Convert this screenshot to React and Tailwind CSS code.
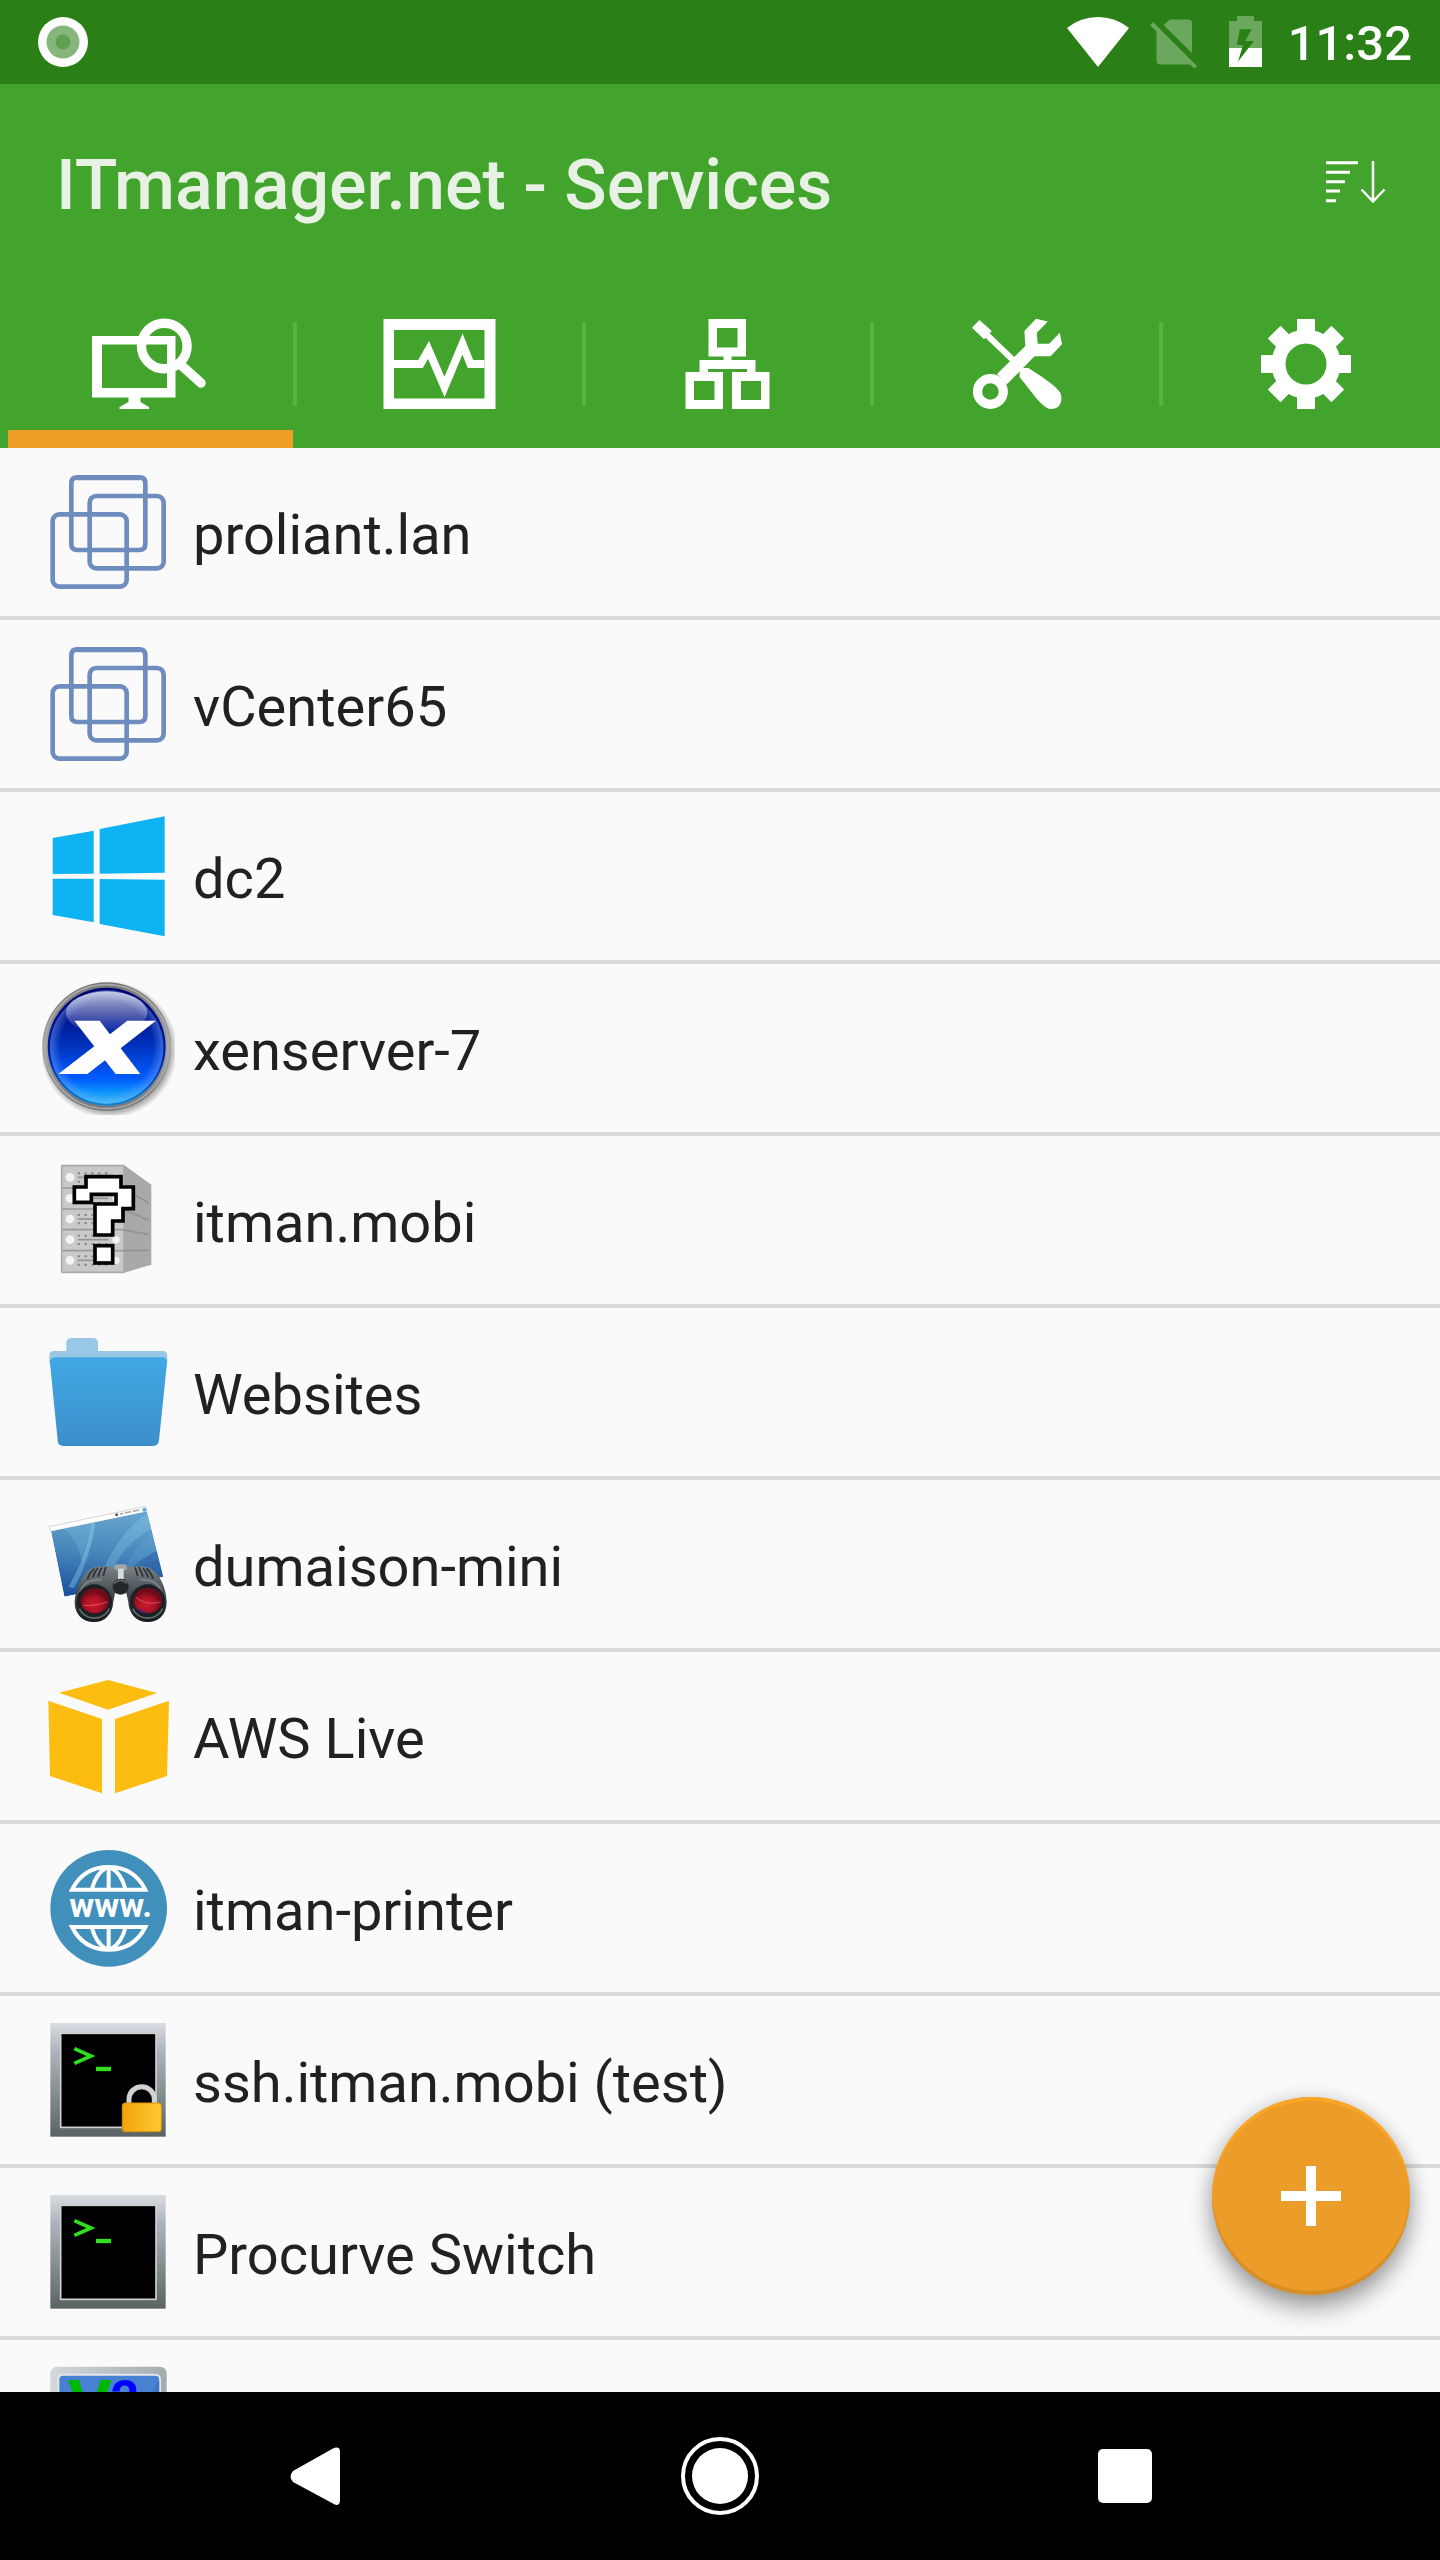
import { Fragment } from 'react';
import clsx from 'clsx';

const iconClass = 'w-[133px] h-[133px] shrink-0';

function VmwareIcon() {
  return (
    <svg viewBox="126 48 399 399" className={iconClass} fill="none" stroke="#6f8cbf" strokeWidth="14">
      <path d="M214 100q0-18 18-18h186q18 0 18 18v182q0 18-18 18h-186q-18 0-18-18z" />
      <path d="M230 83h190" strokeWidth="16" />
      <rect x="269" y="138" width="222" height="217" rx="20" />
      <rect x="158" y="193" width="222" height="217" rx="20" />
    </svg>
  );
}

function WindowsIcon() {
  return (
    <svg viewBox="126 30 399 399" className={iconClass} fill="#10b3f2">
      <polygon points="158,114 281,92 281,221 158,222" />
      <polygon points="299,87 494,49 494,218 299,221" />
      <polygon points="158,236 281,236 281,367 158,345" />
      <polygon points="299,237 494,239 494,409 299,372" />
    </svg>
  );
}

function XenIcon() {
  return (
    <svg viewBox="126 66 399 399" className={iconClass}>
      <defs>
        <linearGradient id="xenRing" x1="0" y1="0" x2="0" y2="1">
          <stop offset="0" stopColor="#777" />
          <stop offset=".5" stopColor="#a5a5a5" />
          <stop offset="1" stopColor="#777" />
        </linearGradient>
        <linearGradient id="xenEdge" x1="0" y1="0" x2="0" y2="1">
          <stop offset="0" stopColor="#00006e" />
          <stop offset=".6" stopColor="#0024a8" />
          <stop offset="1" stopColor="#0e86cf" />
        </linearGradient>
        <linearGradient id="xenBall" x1="0" y1="0" x2="0" y2="1">
          <stop offset="0" stopColor="#00107c" />
          <stop offset=".22" stopColor="#00128a" />
          <stop offset=".5" stopColor="#0034c0" />
          <stop offset=".78" stopColor="#005cff" />
          <stop offset=".9" stopColor="#0c94fb" />
          <stop offset="1" stopColor="#2fb9ee" />
        </linearGradient>
        <linearGradient id="xenGloss" x1="0" y1="0" x2="0" y2="1">
          <stop offset="0" stopColor="#fff" stopOpacity=".72" />
          <stop offset="1" stopColor="#fff" stopOpacity="0" />
        </linearGradient>
        <radialGradient id="xenRim">
          <stop offset=".82" stopColor="#8fb4ff" stopOpacity="0" />
          <stop offset="1" stopColor="#8fb4ff" stopOpacity=".4" />
        </radialGradient>
        <radialGradient id="xenShadow">
          <stop offset=".88" stopColor="#000" stopOpacity=".35" />
          <stop offset="1" stopColor="#000" stopOpacity="0" />
        </radialGradient>
      </defs>
      <circle cx="327" cy="269" r="206" fill="url(#xenShadow)" />
      <circle cx="320" cy="260" r="193" fill="url(#xenRing)" />
      <circle cx="320" cy="260" r="186" fill="none" stroke="#aaa" strokeWidth="5" />
      <circle cx="320" cy="260" r="177" fill="url(#xenEdge)" />
      <circle cx="320" cy="261" r="170" fill="url(#xenBall)" />
      <circle cx="320" cy="261" r="170" fill="url(#xenRim)" />
      <ellipse cx="320" cy="158" rx="122" ry="64" fill="url(#xenGloss)" />
      <g fill="#fff">
        <polygon points="223,182 299,182 421,342 347,342" />
        <polygon points="382,182 468,182 262,342 175,342" />
      </g>
    </svg>
  );
}

function UnknownServerIcon() {
  const units = [112, 175, 237, 299, 361];
  return (
    <svg viewBox="126 42 399 399" className={iconClass}>
      <path d="M365 76h8l81 58v240l-81 24h-8z" fill="#a9a9a9" />
      <rect x="184" y="76" width="186" height="321" fill="#c9c9c9" />
      <path d="M184 77h189M184 397h189M185 76v321" stroke="#aaa" strokeWidth="5" />
      <path d="M188 144h180M188 207h180M188 269h180M188 332h180" stroke="#9a9a9a" strokeWidth="5" />
      <path d="M368 144l77 44M368 207l77 34M368 269l77 14M368 332l77-1" stroke="#939393" strokeWidth="5" />
      {units.map((y) => (
        <g key={y}>
          <circle cx="210" cy={y} r="13" fill="#f4f4f4" />
          <circle cx="348" cy={y} r="11" fill="#f1f1f1" />
          <path d={`M233 ${y}h92`} stroke="#949494" strokeWidth="5" />
          <path d={`M233 ${y - 12}h92M233 ${y + 13}h92`} stroke="#8a8a8a" strokeWidth="6" strokeDasharray="7 13.500" />
        </g>
      ))}
      <g fill="#fff" stroke="#000" strokeWidth="11">
        <path d="M258 110h105v31h37v65h-31v37h-31v42h-53v-93h63v-29h-74v24h-51v-46h35z" />
        <rect x="285" y="317" width="53" height="52" />
      </g>
    </svg>
  );
}

function FolderIcon() {
  return (
    <svg viewBox="126 48 399 399" className={iconClass}>
      <defs>
        <linearGradient id="folder" x1="0" y1="0" x2="0" y2="1">
          <stop offset="0" stopColor="#40a8e4" />
          <stop offset="1" stopColor="#3c8fca" />
        </linearGradient>
      </defs>
      <path d="M148 160v-23q0-14 14-14h37v-23q0-16 16-16h63q16 0 16 16v23h194q14 0 14 14v23z" fill="#98c8e6" />
      <path
        d="M166 142h319q17 0 16 17l-24 232q-2 17-17 17H190q-16 0-17-17L150 159q-1-17 16-17z"
        fill="url(#folder)"
      />
    </svg>
  );
}

function RemoteDesktopIcon() {
  return (
    <svg viewBox="126 564 399 399" className={iconClass}>
      <defs>
        <linearGradient id="desk" x1=".5" y1="0" x2=".4" y2="1">
          <stop offset="0" stopColor="#68a5cd" />
          <stop offset=".5" stopColor="#4585ba" />
          <stop offset="1" stopColor="#1d4f9c" />
        </linearGradient>
        <linearGradient id="barrel" x1="0" y1="0" x2="0" y2="1">
          <stop offset="0" stopColor="#7b8387" />
          <stop offset=".4" stopColor="#4d5559" />
          <stop offset="1" stopColor="#14181a" />
        </linearGradient>
        <radialGradient id="lens" cx=".45" cy=".65">
          <stop offset="0" stopColor="#cc1c2c" />
          <stop offset=".6" stopColor="#ae1224" />
          <stop offset="1" stopColor="#6e0c1a" />
        </radialGradient>
        <clipPath id="deskClip">
          <polygon points="153,664 441,604 490,800 193,860" />
        </clipPath>
      </defs>
      <polygon points="148,650 437,589 441,606 153,664" fill="#fff" stroke="#d5d5d5" strokeWidth="3" />
      <path d="M346 615l8-2" stroke="#555" strokeWidth="7" />
      <path d="M360 612l10-2M375 609l18-4M398 604l20-4" stroke="#aaa" strokeWidth="5" />
      <circle cx="433" cy="599" r="6" fill="#62a8e8" />
      <g clipPath="url(#deskClip)">
        <polygon points="153,664 441,604 490,800 193,860" fill="url(#desk)" />
        <path d="M190 655Q240 700 245 760L275 700Q290 660 285 630z" fill="#8fd0ee" opacity=".22" />
        <path d="M275 635Q265 730 205 830L222 835Q275 740 284 635z" fill="#8fd0ee" opacity=".4" />
        <path d="M455 600Q360 660 310 780L340 775Q380 690 470 650z" fill="#8fd0ee" opacity=".3" />
        <path d="M480 650Q410 690 375 780L500 740z" fill="#8fd0ee" opacity=".12" />
        <path d="M500 710Q420 740 380 790L500 810z" fill="#1b4e96" opacity=".4" />
      </g>
      <path
        d="M224 878C226 835 247 787 278 773C300 767 325 768 345 772L380 772C405 767 430 768 448 774C478 787 500 835 500 878C499 915 475 936 443 936C408 936 386 910 385 875L379 850H345L340 875C338 912 315 936 282 936C248 936 224 912 224 878z"
        fill="url(#barrel)"
      />
      <path d="M262 808q8-22 22-32M278 802q6-18 16-28M294 800q4-15 12-28M310 798q2-12 8-27M460 806q-8-20-20-31M445 802q-6-16-16-28M429 800q-5-16-13-29M413 798q-3-14-8-26" stroke="#2b3135" strokeWidth="5" fill="none" />
      <path d="M240 845q15-40 65-35M485 845q-15-40-65-35" stroke="#8c9498" strokeWidth="5" fill="none" opacity=".7" />
      <rect x="343" y="763" width="38" height="18" rx="9" fill="#9ea5a8" />
      <rect x="354" y="776" width="17" height="36" fill="#d8dcde" />
      <circle cx="362" cy="830" r="24" fill="#23292b" />
      <path d="M343 820q19-18 38 0" stroke="#5d676b" strokeWidth="5" fill="none" />
      <circle cx="283" cy="876" r="53" fill="#1a2023" />
      <circle cx="443" cy="876" r="53" fill="#1a2023" />
      <path d="M238 896a50 50 0 0 0 90 0M398 896a50 50 0 0 0 90 0" stroke="#5f6b70" strokeWidth="5" fill="none" />
      <ellipse cx="285" cy="872" rx="43" ry="38" fill="url(#lens)" />
      <ellipse cx="443" cy="872" rx="43" ry="38" fill="url(#lens)" />
      <path d="M402 882q15 30 45 28q-35-12-45-28z" fill="#5b1d7c" />
      <path d="M250 886q30 4 72-10M408 862q30 26 74 14" stroke="#ee7686" strokeWidth="3" fill="none" opacity=".6" />
    </svg>
  );
}

function AwsIcon() {
  return (
    <svg viewBox="126 60 399 399" className={iconClass} fill="#fdbd10">
      <polygon points="324,90 471,129 324,179 177,128" />
      <polygon points="145,152 306,207 306,430 150,378" />
      <polygon points="507,152 345,207 345,430 501,378" />
    </svg>
  );
}

function WebIcon() {
  return (
    <svg viewBox="126 576 399 399" className={iconClass}>
      <circle cx="326" cy="775" r="175" fill="#4190bc" />
      <g fill="none" stroke="#fff" strokeWidth="12">
        <path d="M216 719Q250 651 326 651T436 719z" />
        <path d="M275 719Q288 670 318 654M377 719Q364 670 334 654M326 651v68" />
        <path d="M216 831Q250 899 326 899T436 831z" />
        <path d="M275 831Q288 880 318 896M377 831Q364 880 334 896M326 831v68" />
      </g>
      <text x="332" y="802" textAnchor="middle" fill="#fff" className="font-[Roboto,sans-serif] text-[102px] font-bold">
        www.
      </text>
    </svg>
  );
}

function TerminalIcon({ locked = false }) {
  return (
    <svg viewBox="126 42 399 399" className={iconClass}>
      <defs>
        <linearGradient id="frame" x1="0" y1="0" x2="0" y2="1">
          <stop offset="0" stopColor="#d7dde0" />
          <stop offset=".25" stopColor="#adb3bc" />
          <stop offset=".6" stopColor="#868f92" />
          <stop offset="1" stopColor="#5a6363" />
        </linearGradient>
        <linearGradient id="padlock">
          <stop offset="0" stopColor="#f0a30a" />
          <stop offset="1" stopColor="#ffc832" />
        </linearGradient>
      </defs>
      <rect x="151" y="69" width="346" height="341" fill="url(#frame)" />
      <rect x="182" y="100" width="286" height="282" fill="#000" stroke="#d0d0d0" strokeWidth="5" />
      <path d="M223 146l50 22-50 22" fill="none" stroke="#2fe01c" strokeWidth="11" />
      <path d="M288 207h45" stroke="#2fe01c" strokeWidth="13" />
      {locked && (
        <>
          <path d="M387 312v-14a38 38 0 0 1 76 0v14" fill="none" stroke="#d2d2d2" strokeWidth="15" />
          <rect x="367" y="309" width="117" height="86" rx="9" fill="url(#padlock)" stroke="#d8930f" strokeWidth="3" />
        </>
      )}
    </svg>
  );
}

function VncIcon() {
  return (
    <svg viewBox="126 1074 399 399" className={iconClass}>
      <defs>
        <linearGradient id="bezel">
          <stop offset="0" stopColor="#d3d8db" />
          <stop offset="1" stopColor="#a3acae" />
        </linearGradient>
      </defs>
      <rect x="151" y="1100" width="349" height="341" rx="20" fill="url(#bezel)" />
      <rect x="175" y="1124" width="305" height="290" rx="14" fill="#4880d2" stroke="#e4e7ea" strokeWidth="6" />
      <path d="M478 1140v272H300z" fill="#3f74c4" />
      <text x="204" y="1283" fill="#00b800" className="font-[Roboto,sans-serif] text-[200px] font-bold">V</text>
      <text x="332" y="1248" fill="#0000ff" className="font-[Roboto,sans-serif] text-[150px] font-bold">2</text>
    </svg>
  );
}

function MonitorSearchIcon() {
  return (
    <svg viewBox="92 317 116 92" className="w-[116px] h-[92px]" fill="none" stroke="#fff">
      <path fill="#fff" stroke="none" fillRule="evenodd" d="M92 335h83.500v61.500H92zM102 343.500v43.500h65v-43.500z" />
      <path fill="#fff" stroke="none" d="M128.500 396h12v5l8.500 5v2h-29.500v-2l9-5z" />
      <circle cx="164.300" cy="345" r="22.800" strokeWidth="9.400" />
      <path d="M181 364l20 18" strokeWidth="9.500" strokeLinecap="round" />
    </svg>
  );
}

function PulseIcon() {
  return (
    <svg viewBox="382 317 113 92" className="w-[113px] h-[92px]">
      <path fill="#fff" fillRule="evenodd" d="M382.500 318h112v90h-112zM393 329v68.500h90.500V329z" />
      <path d="M393 363h26.500l8-14 16 37 18-43 8 20h14" fill="none" stroke="#fff" strokeWidth="8" />
    </svg>
  );
}

function NetworkIcon() {
  return (
    <svg viewBox="685 317 85 92" className="w-[85px] h-[92px]" fill="#fff" fillRule="evenodd">
      <path d="M708.500 318H746v37.500h-37.500zM717 327v19.500h20.500V327z" />
      <path d="M723.500 355h8v4h24v13h-8.500v-4h-39v4h-8.500v-13h24z" />
      <path d="M685.500 371H723v37h-37.500zM694 380v19h20.500v-19z" />
      <path d="M732 371h37.500v37H732zM741 380v19h20v-19z" />
    </svg>
  );
}

function ToolsIcon() {
  return (
    <svg viewBox="971 317 92 92" className="w-[92px] h-[92px]" fill="#fff">
      <circle cx="990.400" cy="390.500" r="12.900" fill="none" stroke="#fff" strokeWidth="9.200" />
      <polygon points="997,373 1025.300,345 1024.400,330 1036,317.700 1047.800,320.500 1036.800,331.700 1037.700,342.700 1049.200,342.700 1059.800,331.700 1062,343.300 1050.600,355.300 1034.500,355.300 1007,383.300" />
      <polygon points="979.400,319 991.800,330 984,338.300 972,326.700" />
      <path d="M986 333l28 27" stroke="#fff" strokeWidth="6" />
      <path d="M1020 367h8.500c10 7 26 16 32 25c3 10-2 17-11 16c-9-3-15-14-30-32z" />
    </svg>
  );
}

function GearIcon() {
  const teeth = [0, 45, 90, 135, 180, 225, 270, 315];
  return (
    <svg viewBox="-46 -46 92 92" className="w-[92px] h-[92px]" fill="#fff">
      <circle r="27.500" fill="none" stroke="#fff" strokeWidth="14" />
      {teeth.map((a) => (
        <rect key={a} x="-9" y="-45" width="18" height="16" transform={`rotate(${a})`} />
      ))}
    </svg>
  );
}

const tabs = [
  { name: 'Services', Icon: MonitorSearchIcon },
  { name: 'Monitors', Icon: PulseIcon },
  { name: 'Network', Icon: NetworkIcon },
  { name: 'Tools', Icon: ToolsIcon },
  { name: 'Settings', Icon: GearIcon },
];

const services = [
  { name: 'proliant.lan', icon: <VmwareIcon /> },
  { name: 'vCenter65', icon: <VmwareIcon /> },
  { name: 'dc2', icon: <WindowsIcon /> },
  { name: 'xenserver-7', icon: <XenIcon /> },
  { name: 'itman.mobi', icon: <UnknownServerIcon /> },
  { name: 'Websites', icon: <FolderIcon /> },
  { name: 'dumaison-mini', icon: <RemoteDesktopIcon /> },
  { name: 'AWS Live', icon: <AwsIcon /> },
  { name: 'itman-printer', icon: <WebIcon /> },
  { name: 'ssh.itman.mobi (test)', icon: <TerminalIcon locked /> },
  { name: 'Procurve Switch', icon: <TerminalIcon /> },
  { name: '', icon: <VncIcon /> },
];

function StatusBar() {
  return (
    <div className="flex items-center justify-between h-[84px] pl-[38px] pr-7 bg-[#2a7f17] text-white">
      <svg viewBox="0 0 50 50" className="w-[50px] h-[50px]">
        <circle cx="25" cy="25" r="25" fill="#fff" />
        <circle cx="25" cy="25" r="16.500" fill="#87b67c" />
        <circle cx="25" cy="25" r="7.500" fill="#5fa151" />
      </svg>
      <div className="flex items-center gap-[25px]">
        <svg viewBox="1067 16 196 53" className="w-[196px] h-[53px]">
          <path d="M1098 67l-31-39A49 49 0 0 1 1129 28z" fill="#fff" />
          <g fill="#6ba75c">
            <path d="M1170 19.500h18q4 0 4 4V53l-28.500-28z" />
            <path d="M1153 22l44 44-2.500 2.500-4.500-4h-29.500q-4 0-4-4V31.500L1150 25z" />
            <path d="M1237 16h17v5h8v27h-33V21h8z" />
          </g>
          <path d="M1229 48h33v19h-33z" fill="#fff" />
          <path d="M1239.700 29.300h12L1245 41h9l-16 20.500 5-16.500h-6z" fill="#2a7f17" />
        </svg>
        <span className="pt-1 text-[49px] leading-[56px] font-medium">11:32</span>
      </div>
    </div>
  );
}

export default function App() {
  return (
    <div className="flex flex-col h-screen overflow-hidden bg-[#fafafa] font-[Roboto,sans-serif]">
      <StatusBar />

      <header className="bg-[#43a42d]">
        <div className="flex items-center justify-between h-[196px] pl-14 pr-[54px]">
          <h1 className="pt-[5px] text-[70px] leading-[84px] font-medium text-[#e7f2e5]">ITmanager.net - Services</h1>
          <button aria-label="Sort">
            <svg viewBox="1326 160 60 44" className="w-[60px] h-[44px]" fill="none" stroke="#fff" strokeWidth="3">
              <path d="M1326 162.700h32M1326 172.300h24M1326 181.700h19M1326 191h14M1326 200.700h10" />
              <path d="M1373 161v41M1361.500 189.500l11.500 12 11.500-12" strokeWidth="2.500" />
            </svg>
          </button>
        </div>

        <div className="overflow-hidden">
          <nav className="flex items-center ml-2 -mr-2 h-[168px]" role="tablist">
            {tabs.map(({ name, Icon }, i) => (
              <Fragment key={name}>
                {i > 0 && <div className="w-1 h-[84px] shrink-0 bg-[#5bb047]" />}
                <button
                  role="tab"
                  aria-label={name}
                  aria-selected={i === 0}
                  className={clsx(
                    'flex flex-1 h-full items-center justify-center border-y-[18px] border-transparent',
                    i === 0 && 'border-b-[#ee9d27]'
                  )}
                >
                  <Icon />
                </button>
              </Fragment>
            ))}
          </nav>
        </div>
      </header>

      <main className="relative flex-1 min-h-0 overflow-hidden">
        <ul>
          {services.map((service, i) => (
            <li key={i} className="border-b-4 border-[#dadada]">
              <a href="#" className="flex items-center gap-[18px] pt-[18px] pb-[17px] pl-[42px]">
                {service.icon}
                <span className="pt-[5px] text-[56px] leading-[66px] text-[#212121]">{service.name}</span>
              </a>
            </li>
          ))}
        </ul>
        <button
          aria-label="Add service"
          className="absolute right-[30px] bottom-[97px] flex items-center justify-center w-[198px] h-[198px] rounded-full bg-[#ec9c28] shadow-[0_14px_24px_rgba(0,0,0,0.32),0_2px_20px_rgba(0,0,0,0.16),inset_0_4px_1px_#fca628,inset_0_-4px_1px_#d68e26]"
        >
          <svg viewBox="0 0 60 60" className="w-[60px] h-[60px]" stroke="#fff" strokeWidth="10">
            <path d="M0 30h60M30 0v60" />
          </svg>
        </button>
      </main>

      <footer className="grid grid-cols-3 h-[168px] px-28 bg-black">
        <button aria-label="Back" className="flex items-center justify-center">
          <svg viewBox="290 2447 50 58" className="w-[50px] h-[58px]" fill="#fff">
            <path d="M293 2471l39-22q8-4 8 3v48q0 8-8 3l-39-21q-5-5 0-11z" />
          </svg>
        </button>
        <button aria-label="Home" className="flex items-center justify-center">
          <svg viewBox="0 0 78 78" className="w-[78px] h-[78px]">
            <circle cx="39" cy="39" r="37" fill="none" stroke="#fff" strokeWidth="4" />
            <circle cx="39" cy="39" r="28" fill="#fff" />
          </svg>
        </button>
        <button aria-label="Recent apps" className="flex items-center justify-center">
          <svg viewBox="0 0 54 54" className="w-[54px] h-[54px]">
            <rect width="54" height="54" rx="5" fill="#fff" />
          </svg>
        </button>
      </footer>
    </div>
  );
}
